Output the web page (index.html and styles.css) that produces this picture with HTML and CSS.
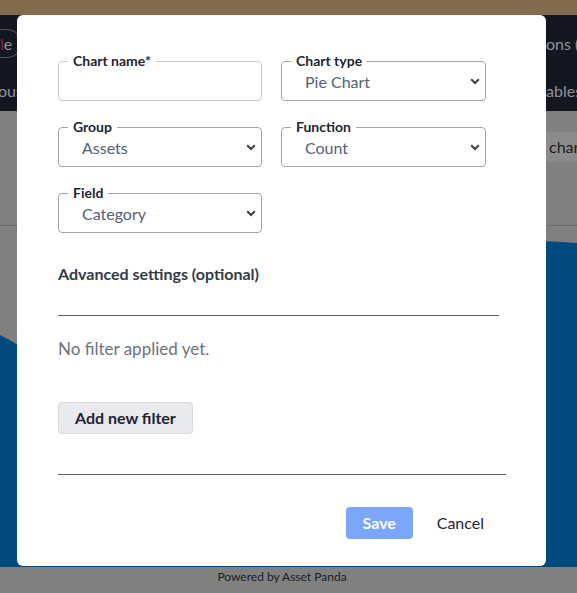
FILE: index.html
```html
<!DOCTYPE html>
<html lang="en">
<head>
<meta charset="utf-8">
<title>New chart</title>
<link rel="stylesheet" href="styles.css">
</head>
<body>
<div class="page">
  <div class="topbar"></div>
  <div class="nav">
    <div class="nav-row">
      <span class="pill"><span class="pill-red">l</span>e</span>
      <span class="nav-right">ons (</span>
    </div>
    <div class="nav-row">
      <span class="nav-left">ous</span>
      <span class="nav-right">ables</span>
    </div>
  </div>
  <div class="main">
    <div class="toolbar"><span class="tool-btn">chart</span></div>
    <div class="rule"></div>
    <svg class="chart" width="577" height="341" viewBox="0 0 577 341">
      <circle cx="530" cy="574" r="559" fill="#004a7f"/>
      <path d="M0 109 Q20 119 45 136 L45 341 L0 341 Z" fill="#004a7f"/>
    </svg>
  </div>
  <div class="footer">Powered by Asset Panda</div>
</div>

<div class="modal">
  <div class="fields">
    <div class="field field-input">
      <span class="field-label">Chart name*</span>
    </div>
    <div class="field">
      <span class="field-label">Chart type</span>
      <span class="field-value">Pie Chart</span>
      <svg class="chevron" width="10" height="7" viewBox="0 0 10 7"><path d="M1.2 1.2 L5 5 L8.8 1.2" fill="none" stroke="#3b404b" stroke-width="2"/></svg>
    </div>
    <div class="field">
      <span class="field-label">Group</span>
      <span class="field-value">Assets</span>
      <svg class="chevron" width="10" height="7" viewBox="0 0 10 7"><path d="M1.2 1.2 L5 5 L8.8 1.2" fill="none" stroke="#3b404b" stroke-width="2"/></svg>
    </div>
    <div class="field">
      <span class="field-label">Function</span>
      <span class="field-value">Count</span>
      <svg class="chevron" width="10" height="7" viewBox="0 0 10 7"><path d="M1.2 1.2 L5 5 L8.8 1.2" fill="none" stroke="#3b404b" stroke-width="2"/></svg>
    </div>
    <div class="field">
      <span class="field-label">Field</span>
      <span class="field-value">Category</span>
      <svg class="chevron" width="10" height="7" viewBox="0 0 10 7"><path d="M1.2 1.2 L5 5 L8.8 1.2" fill="none" stroke="#3b404b" stroke-width="2"/></svg>
    </div>
  </div>

  <div class="adv-heading">Advanced settings (optional)</div>
  <div class="divider divider-short"></div>
  <div class="empty-text">No filter applied yet.</div>
  <button class="btn-secondary" type="button">Add new filter</button>
  <div class="divider divider-long"></div>
  <div class="actions">
    <button class="btn-save" type="button">Save</button>
    <button class="btn-cancel" type="button">Cancel</button>
  </div>
</div>
</body>
</html>
```

FILE: styles.css
```css
html, body {
  margin: 0;
  padding: 0;
}
body {
  width: 577px;
  height: 593px;
  overflow: hidden;
  position: relative;
  font-family: Lato, "Open Sans", "Liberation Sans", sans-serif;
  background: #808080;
}

.page {
  display: flex;
  flex-direction: column;
  width: 577px;
  height: 593px;
}

.topbar {
  height: 15px;
  background: #826c4d;
  flex: none;
}

.nav {
  height: 96px;
  box-sizing: border-box;
  padding-top: 14px;
  background: #131722;
  display: flex;
  flex-direction: column;
  gap: 23px;
  flex: none;
}
.nav-row {
  display: flex;
  justify-content: space-between;
  align-items: center;
  font-size: 16px;
  line-height: 20px;
  color: #8f939b;
  white-space: nowrap;
}
.pill {
  height: 27px;
  display: flex;
  align-items: center;
  padding-right: 8px;
  border: 1px solid #4d525c;
  border-left: none;
  border-radius: 0 14px 14px 0;
}
.pill-red {
  color: #8e2331;
}
.nav-left {
  margin-left: -2px;
}
.nav-right {
  width: 31px;
  overflow: hidden;
}

.main {
  flex: none;
  height: 456px;
  box-sizing: border-box;
  padding-top: 21px;
  display: flex;
  flex-direction: column;
  background: #808080;
  overflow: hidden;
}
.toolbar {
  display: flex;
  justify-content: flex-end;
}
.tool-btn {
  width: 60px;
  height: 30px;
  box-sizing: border-box;
  padding-left: 32px;
  background: #8b8b8b;
  font-size: 16px;
  line-height: 30px;
  color: #1d1d1d;
  white-space: nowrap;
  overflow: hidden;
}
.rule {
  margin-top: 63px;
  height: 1px;
  background: #6c6c6c;
  flex: none;
}
.chart {
  display: block;
  flex: none;
}

.footer {
  flex: none;
  height: 26px;
  box-sizing: border-box;
  padding-top: 2px;
  padding-right: 13px;
  text-align: center;
  font-size: 12px;
  line-height: 16px;
  color: #1c1c1e;
  background: #808080;
}

/* modal */
.modal {
  position: absolute;
  left: 17px;
  top: 15px;
  width: 529px;
  height: 551px;
  box-sizing: border-box;
  padding: 46px 0 0 41px;
  background: #ffffff;
  border-radius: 6px;
  display: flex;
  flex-direction: column;
  align-items: flex-start;
}

.fields {
  display: grid;
  grid-template-columns: 204px 205px;
  grid-auto-rows: 40px;
  column-gap: 19px;
  row-gap: 26px;
}
.field {
  position: relative;
  box-sizing: border-box;
  height: 40px;
  border: 1px solid #a2a5af;
  border-radius: 4px;
  display: flex;
  align-items: center;
  padding: 1px 5px 0 23px;
}
.field-input {
  border-color: #c6c8cd;
}
.field-label {
  position: absolute;
  top: -10px;
  left: 9px;
  padding: 0 5px;
  background: #ffffff;
  font-size: 14px;
  line-height: 17px;
  font-weight: 700;
  color: #1f2433;
  white-space: nowrap;
}
.field-value {
  font-size: 16px;
  line-height: 20px;
  color: #556078;
}
.chevron {
  margin-left: auto;
  display: block;
}

.adv-heading {
  margin-top: 31px;
  font-size: 16px;
  line-height: 20px;
  font-weight: 700;
  color: #343a48;
}
.divider {
  height: 1px;
  background: #5d6472;
}
.divider-short {
  width: 441px;
  margin-top: 31px;
}
.divider-long {
  width: 448px;
  margin-top: 40px;
}
.empty-text {
  margin-top: 23px;
  font-size: 17px;
  line-height: 20px;
  color: #6b7280;
}
.btn-secondary {
  margin-top: 43px;
  height: 32px;
  box-sizing: border-box;
  padding: 0 16px 2px;
  border: 1px solid #d8dadf;
  border-radius: 4px;
  background: #e9eaee;
  font-family: inherit;
  font-size: 16px;
  font-weight: 700;
  color: #1f2433;
}
.actions {
  margin-top: 32px;
  width: 448px;
  display: flex;
  justify-content: flex-end;
  gap: 2px;
}
.btn-save {
  height: 32px;
  width: 67px;
  box-sizing: border-box;
  padding: 0 0 2px;
  border: none;
  border-radius: 4px;
  background: #7ba6fc;
  font-family: inherit;
  font-size: 16px;
  font-weight: 700;
  color: #ffffff;
}
.btn-cancel {
  height: 32px;
  padding: 0 22px 2px;
  border: none;
  background: none;
  font-family: inherit;
  font-size: 16px;
  color: #1f2433;
}
```
